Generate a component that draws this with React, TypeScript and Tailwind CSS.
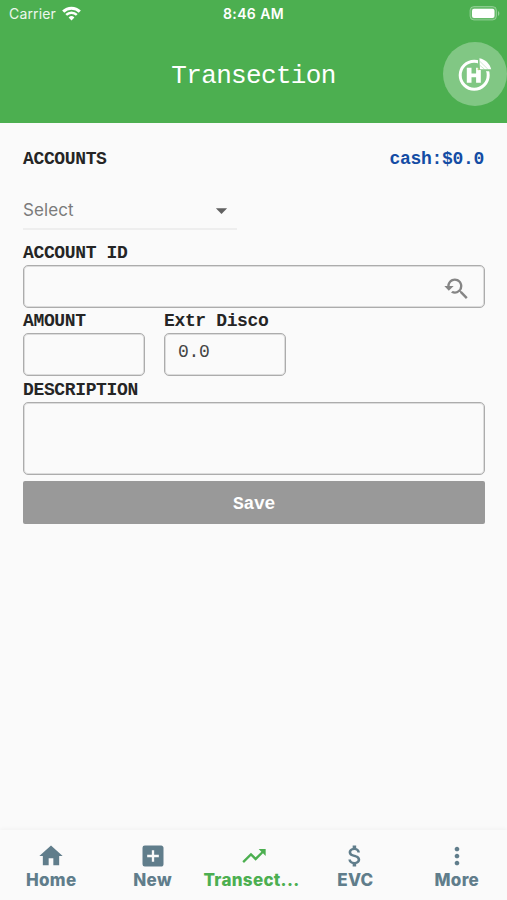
import React, { useState } from "react";
import {
  MdAddBox,
  MdArrowDropDown,
  MdAttachMoney,
  MdHome,
  MdMoreVert,
  MdTrendingUp,
  MdYoutubeSearchedFor,
} from "react-icons/md";

const tabs = [
  { label: "Home", icon: MdHome },
  { label: "New", icon: MdAddBox },
  { label: "Transect...", icon: MdTrendingUp },
  { label: "EVC", icon: MdAttachMoney },
  { label: "More", icon: MdMoreVert },
];

const StatusBar = () => (
  <div className="h-[27px] grid grid-cols-3 items-center pl-[9px] pr-[7px]">
    <div className="flex items-center gap-[6px]">
      <span className="text-[14px] tracking-[0.15px] text-white/90">Carrier</span>
      <svg width="19" height="15" viewBox="0 0 19 15" fill="none" stroke="white">
        <path d="M1.2 5.6a11.8 11.8 0 0 1 16.6 0" strokeWidth="3" />
        <path d="M4.2 8.9a7.6 7.6 0 0 1 10.6 0" strokeWidth="2.5" />
        <path d="M9.5 14.4 6.6 11.5a4.1 4.1 0 0 1 5.8 0Z" fill="white" stroke="none" />
      </svg>
    </div>
    <span className="-ml-[2px] text-center text-[14px] font-semibold tracking-[0.4px]">8:46 AM</span>
    <svg className="justify-self-end" width="31" height="15" viewBox="0 0 31 15">
      <rect x="1" y="0.5" width="26.5" height="13.5" rx="4" fill="white" fillOpacity="0.15" stroke="white" strokeOpacity="0.3" />
      <rect x="3" y="2.7" width="22.5" height="9.2" rx="2" fill="white" />
      <path d="M29 5v5c1.8-.8 1.8-4.2 0-5Z" fill="white" fillOpacity="0.4" />
    </svg>
  </div>
);

const Logo = () => (
  <svg width="34" height="34" viewBox="0 0 34 34">
    <circle cx="16.2" cy="18.2" r="14" fill="none" stroke="white" strokeWidth="3" />
    <path d="M20 0v12.4h2.6l1 1.8h11C33 7 28 1.8 20 0Z" fill="#81c784" />
    <path
      d="M8.8 10.8h4.7v5.6h4.6v-5.6h1.6l1.4 2.2h1.7v12.8h-4.7v-5.6h-4.6v5.6H8.8Z"
      fill="white"
    />
    <path d="M21.4 1.2c6 1.3 10.3 5.3 11.8 11.1l-11.2-.1Z" fill="white" />
    <path
      d="m22 4.5 7.8 7.6M22 8.5l4.5 3.7"
      stroke="#81c784"
      strokeWidth="0.4"
      fill="none"
    />
    <circle cx="20.6" cy="12.2" r="1.1" fill="#aed581" />
  </svg>
);

const Label = ({ children }: { children: React.ReactNode }) => (
  <label className="block h-[26px] pt-px font-['Liberation_Mono',monospace] text-[18px] leading-[27px] font-bold tracking-[-0.36px] text-[#252525]">
    {children}
  </label>
);

const boxStyle =
  "block w-full rounded-[5px] border border-[#acacac] shadow-[inset_0_0_0_1px_#dcdcdc] bg-transparent outline-none font-['Liberation_Mono',monospace] text-[18px] tracking-[-0.36px] text-[#444]";

const App = () => {
  const [accountId, setAccountId] = useState("");
  const [amount, setAmount] = useState("");
  const [discount, setDiscount] = useState("0.0");
  const [description, setDescription] = useState("");
  const [active, setActive] = useState(2);

  return (
    <div className="flex h-screen flex-col bg-[#fafafa] font-[Inter,sans-serif]">
      <header className="h-[123px] shrink-0 bg-[#4caf50] text-white">
        <StatusBar />
        <div className="grid h-[94px] grid-cols-[64px_1fr_64px] items-center">
          <h1 className="col-start-2 pt-[5px] text-center font-['Liberation_Mono',monospace] text-[26px] tracking-[-0.66px]">
            Transection
          </h1>
          <button className="flex size-[64px] items-center justify-center rounded-full bg-[#81c784]">
            <Logo />
          </button>
        </div>
      </header>

      <main className="flex-1 pr-[22px] pl-[23px] pt-[22px]">
        <div className="flex justify-between pr-px">
          <Label>ACCOUNTS</Label>
          <span className="h-[26px] pt-px font-['Liberation_Mono',monospace] text-[18px] leading-[27px] font-bold tracking-[-0.3px] text-[#134ca4]">
            cash:$0.0
          </span>
        </div>

        <button className="mt-[21px] flex h-[38px] w-[214px] items-center justify-between border-b-2 border-[#eeeeee] pr-[2px] text-[#7b7b7b]">
          <span className="pt-px text-[17px] tracking-[0.1px]">Select</span>
          <MdArrowDropDown size={27} className="text-[#616161]" />
        </button>

        <div className="mt-[9px]">
          <Label>ACCOUNT ID</Label>
          <div className="relative">
            <input
              className={`${boxStyle} h-[43px] px-3 pr-12`}
              value={accountId}
              onChange={(e) => setAccountId(e.target.value)}
            />
            <MdYoutubeSearchedFor size={28} className="absolute top-[10px] right-[15px] text-[#858585]" />
          </div>
        </div>

        <div className="-mt-px flex gap-[19px]">
          <div className="w-[122px]">
            <Label>AMOUNT</Label>
            <input
              className={`${boxStyle} h-[43px] px-3`}
              value={amount}
              onChange={(e) => setAmount(e.target.value)}
            />
          </div>
          <div className="w-[122px]">
            <Label>Extr Disco</Label>
            <input
              className={`${boxStyle} h-[43px] px-[13px] pb-[5px]`}
              value={discount}
              onChange={(e) => setDiscount(e.target.value)}
            />
          </div>
        </div>

        <Label>DESCRIPTION</Label>
        <textarea
          className={`${boxStyle} h-[73px] resize-none p-3`}
          value={description}
          onChange={(e) => setDescription(e.target.value)}
        />

        <button className="mt-[6px] h-[43px] w-full rounded-[2px] bg-[#999999] pt-[3px] font-['Liberation_Mono',monospace] text-[18px] font-bold tracking-[-0.36px] text-white">
          Save
        </button>
      </main>

      <nav className="grid h-[70px] shrink-0 grid-cols-5 bg-[#fafafa] shadow-[0_-1px_4px_rgba(0,0,0,0.04)]">
        {tabs.map(({ label, icon: Icon }, i) => (
          <button
            key={label}
            onClick={() => setActive(i)}
            className={`flex flex-col items-center pt-[12px] pl-px ${
              active === i ? "text-[#4caf50]" : "text-[#607d8b]"
            }`}
          >
            <Icon size={28} />
            <span className={`text-[17px] leading-[21px] font-extrabold tracking-[0.3px] ${active === i ? "pr-[5px]" : ""}`}>
              {label}
            </span>
          </button>
        ))}
      </nav>
    </div>
  );
};

export default App;
